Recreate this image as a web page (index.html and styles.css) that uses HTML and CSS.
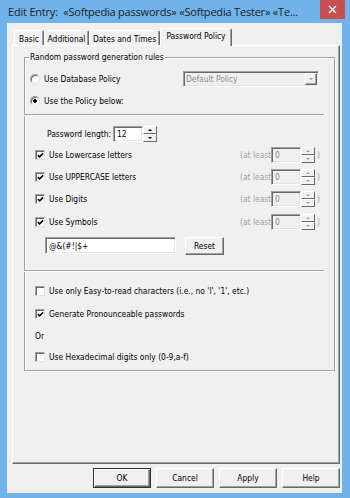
FILE: index.html
```html
<!DOCTYPE html>
<html>
<head>
<meta charset="utf-8">
<link rel="stylesheet" href="styles.css">
</head>
<body>
<div class="window">
  <div class="titlebar">
    <span class="title">Edit Entry:&nbsp;&nbsp;«Softpedia passwords» «Softpedia Tester» «Te...</span>
    <div class="close"><svg width="9" height="9" viewBox="0 0 9 9"><path d="M1 1L8 8M8 1L1 8" stroke="#fff" stroke-width="1.4"/></svg></div>
  </div>
  <div class="client">
    <div class="tabs">
      <div class="tab w-basic">Basic</div>
      <div class="tab w-add">Additional</div>
      <div class="tab w-dates">Dates and Times</div>
      <div class="tab active">Password Policy</div>
    </div>
    <div class="panel">
      <div class="group">
        <span class="legend">Random password generation rules</span>
        <div class="row r22 pl-radio">
          <span class="radio"></span><span class="lbl">Use Database Policy</span>
          <div class="combo"><span class="combo-text">Default Policy</span><span class="combo-btn"><i class="arr-down dis"></i></span></div>
        </div>
        <div class="row r22 pl-radio">
          <span class="radio on"></span><span class="lbl">Use the Policy below:</span>
        </div>
        <div class="sep sep1"></div>
        <div class="row r21 pl-len">
          <span class="len-lbl">Password length:</span>
          <span class="field len-field">12</span>
          <span class="spin"><span><i class="arr-up"></i></span><span><i class="arr-down"></i></span></span>
        </div>
        <div class="row r22 pl-chk">
          <span class="chk"><svg viewBox="0 0 8 8"><path d="M1 3.6L3 5.6L7 1.6" fill="none" stroke="#000" stroke-width="1.7"/></svg></span>
          <span class="lbl chk-lbl">Use Lowercase letters</span>
          <span class="atleast">(at least</span><span class="field dis small-field">0</span><span class="spin dis"><span><i class="arr-up dis"></i></span><span><i class="arr-down dis"></i></span></span><span class="paren">)</span>
        </div>
        <div class="row r22 pl-chk">
          <span class="chk"><svg viewBox="0 0 8 8"><path d="M1 3.6L3 5.6L7 1.6" fill="none" stroke="#000" stroke-width="1.7"/></svg></span>
          <span class="lbl chk-lbl">Use UPPERCASE letters</span>
          <span class="atleast">(at least</span><span class="field dis small-field">0</span><span class="spin dis"><span><i class="arr-up dis"></i></span><span><i class="arr-down dis"></i></span></span><span class="paren">)</span>
        </div>
        <div class="row r22 pl-chk">
          <span class="chk"><svg viewBox="0 0 8 8"><path d="M1 3.6L3 5.6L7 1.6" fill="none" stroke="#000" stroke-width="1.7"/></svg></span>
          <span class="lbl chk-lbl">Use Digits</span>
          <span class="atleast">(at least</span><span class="field dis small-field">0</span><span class="spin dis"><span><i class="arr-up dis"></i></span><span><i class="arr-down dis"></i></span></span><span class="paren">)</span>
        </div>
        <div class="row r22 pl-chk mt1">
          <span class="chk"><svg viewBox="0 0 8 8"><path d="M1 3.6L3 5.6L7 1.6" fill="none" stroke="#000" stroke-width="1.7"/></svg></span>
          <span class="lbl chk-lbl">Use Symbols</span>
          <span class="atleast">(at least</span><span class="field dis small-field">0</span><span class="spin dis"><span><i class="arr-up dis"></i></span><span><i class="arr-down dis"></i></span></span><span class="paren">)</span>
        </div>
        <div class="row sym-row">
          <span class="field sym-field">@&amp;(#!|$+</span>
          <span class="btn reset">Reset</span>
        </div>
        <div class="sep sep2"></div>
        <div class="row r22 pl-chk mt8">
          <span class="chk"></span>
          <span class="lbl">Use only Easy-to-read characters (i.e., no 'l', '1', etc.)</span>
        </div>
        <div class="row r22 pl-chk mt1">
          <span class="chk"><svg viewBox="0 0 8 8"><path d="M1 3.6L3 5.6L7 1.6" fill="none" stroke="#000" stroke-width="1.7"/></svg></span>
          <span class="lbl">Generate Pronounceable passwords</span>
        </div>
        <div class="row r21 pl-chk">
          <span>Or</span>
        </div>
        <div class="row r22 pl-chk">
          <span class="chk"></span>
          <span class="lbl">Use Hexadecimal digits only (0-9,a-f)</span>
        </div>
      </div>
    </div>
    <div class="buttons">
      <span class="btn default">OK</span>
      <span class="btn">Cancel</span>
      <span class="btn">Apply</span>
      <span class="btn">Help</span>
    </div>
  </div>
</div>
</body>
</html>
```

FILE: styles.css
```css
* { box-sizing: border-box; }
body {
  margin: 0;
  background: #6fb3ea;
  font-family: "DejaVu Sans Condensed", "Liberation Sans", sans-serif;
  font-size: 8.4px;
  color: #000;
}
.window {
  width: 350px;
  height: 498px;
  background: #6fb3ea;
  display: flex;
  flex-direction: column;
  overflow: hidden;
}
.titlebar {
  height: 23px;
  flex: none;
  display: flex;
  justify-content: space-between;
  align-items: flex-start;
}
.title {
  font-family: "Open Sans", "Noto Sans", sans-serif;
  font-size: 11px;
  letter-spacing: -0.2px;
  line-height: 24px;
  padding-left: 8px;
  white-space: nowrap;
  color: #1e1e1e;
}
.close {
  flex: none;
  width: 25px;
  height: 19px;
  margin-right: 5px;
  background: #c75050;
  display: flex;
  align-items: center;
  justify-content: center;
}
.close svg { display: block; }
.client {
  margin: 0 8px 0 7px;
  height: 470px;
  background: #f0f0f0;
  padding-top: 5px;
}
.tabs {
  display: flex;
  align-items: flex-end;
  height: 17px;
  padding-left: 7px;
  position: relative;
  z-index: 1;
}
.tab {
  height: 15px;
  border-top: 1px solid #fff;
  border-left: 1px solid #fff;
  border-right: 1px solid #696969;
  box-shadow: inset -1px 0 #a0a0a0;
  border-radius: 2px 2px 0 0;
  display: flex;
  align-items: center;
  justify-content: center;
  white-space: nowrap;
  padding-top: 1px;
}
.w-basic { width: 30px; }
.w-add { width: 45px; }
.w-dates { width: 71px; }
.tab.active {
  width: 72px;
  height: 18px;
  margin-bottom: -1px;
  background: #f0f0f0;
  padding-top: 0;
  padding-bottom: 3px;
}
.panel {
  margin-left: 5px;
  width: 328px;
  height: 419px;
  border-top: 1px solid #fff;
  border-left: 1px solid #fff;
  border-right: 1px solid #696969;
  border-bottom: 1px solid #696969;
  box-shadow: inset -1px -1px #a0a0a0;
  padding: 11px 0 0 11px;
}
.group {
  position: relative;
  width: 311px;
  height: 314px;
  border: 1px solid #a0a0a0;
  box-shadow: 1px 1px 0 #fff, inset 1px 1px 0 #fff;
  padding-top: 10px;
}
.legend {
  position: absolute;
  left: 4px;
  top: -6px;
  line-height: 11px;
  padding: 0 1px;
  background: #f0f0f0;
  white-space: nowrap;
}
.row {
  display: flex;
  align-items: center;
  white-space: nowrap;
}
.r22 { height: 22px; }
.r21 { height: 21px; }
.mt1 { margin-top: 1px; }
.mt8 { margin-top: 8px; }
.pl-radio { padding-left: 5px; }
.pl-chk { padding-left: 10px; }
.pl-len { padding-left: 22px; margin-top: 7px; }
.lbl { margin-left: 4px; }
.radio {
  flex: none;
  width: 10px;
  height: 10px;
  border-radius: 50%;
  border: 1px solid;
  border-color: #a0a0a0 #e3e3e3 #e3e3e3 #a0a0a0;
  background: #fff;
  box-shadow: inset 1px 1px 0 #696969;
}
.radio.on {
  background: radial-gradient(circle at 50% 50%, #000 0, #000 1.6px, #fff 2.1px);
}
.combo {
  margin-left: auto;
  margin-right: 15px;
  width: 136px;
  height: 16px;
  border: 1px solid;
  border-color: #a0a0a0 #fff #fff #a0a0a0;
  box-shadow: inset 1px 1px 0 #696969, inset -1px -1px 0 #e3e3e3;
  background: #f0f0f0;
  display: flex;
  align-items: center;
  padding: 1px 1px 1px 2px;
}
.combo-text { flex: 1; color: #8a8a8a; }
.combo-btn {
  width: 12px;
  height: 12px;
  border: 1px solid;
  border-color: #fff #696969 #696969 #fff;
  box-shadow: inset -1px -1px 0 #a0a0a0;
  display: flex;
  align-items: center;
  justify-content: center;
}
.sep {
  height: 2px;
  border-top: 1px solid #a0a0a0;
  border-bottom: 1px solid #fff;
  margin-left: -1px;
  width: 300px;
}
.sep1 { margin-top: 2px; }
.sep2 { margin-top: 15px; }
.len-lbl { width: 66px; }
.field {
  height: 16px;
  border: 1px solid;
  border-color: #a0a0a0 #fff #fff #a0a0a0;
  box-shadow: inset 1px 1px 0 #696969, inset -1px -1px 0 #e3e3e3;
  background: #fff;
  display: flex;
  align-items: center;
  padding-left: 3px;
}
.field.dis { background: #f0f0f0; color: #8a8a8a; }
.len-field { width: 30px; }
.spin {
  width: 14px;
  height: 16px;
  display: flex;
  flex-direction: column;
}
.spin > span {
  flex: 1;
  border: 1px solid;
  border-color: #fff #696969 #696969 #fff;
  background: #f0f0f0;
  display: flex;
  align-items: center;
  justify-content: center;
}
.arr-up, .arr-down {
  width: 0;
  height: 0;
  border-left: 2px solid transparent;
  border-right: 2px solid transparent;
}
.arr-up { border-bottom: 2px solid #000; }
.arr-down { border-top: 2px solid #000; }
.arr-up.dis { border-bottom-color: #a0a0a0; }
.arr-down.dis { border-top-color: #a0a0a0; }
.chk {
  flex: none;
  width: 10px;
  height: 10px;
  border: 1px solid;
  border-color: #a0a0a0 #e3e3e3 #e3e3e3 #a0a0a0;
  box-shadow: inset 1px 1px 0 #696969;
  background: #fff;
  display: flex;
  align-items: center;
  justify-content: center;
}
.chk svg { width: 7px; height: 7px; display: block; margin: 1px 0 0 1px; }
.chk-lbl { width: 191px; }
.atleast { width: 31px; color: #a0a0a0; }
.small-field { width: 30px; }
.paren { margin-left: 2px; color: #a0a0a0; }
.sym-row { margin-top: 4px; height: 18px; padding-left: 20px; align-items: flex-start; }
.sym-field { width: 131px; height: 17px; }
.btn {
  flex: none;
  width: 58px;
  height: 20px;
  border: 1px solid;
  border-color: #fff #696969 #696969 #fff;
  box-shadow: inset -1px -1px 0 #a0a0a0;
  background: #f0f0f0;
  display: flex;
  align-items: center;
  justify-content: center;
}
.reset { width: 39px; height: 18px; margin-left: 9px; }
.btn.default {
  border-color: #303030;
  box-shadow: inset 1px 1px 0 #fff, inset -1px -1px 0 #696969, inset -2px -2px 0 #a0a0a0;
}
.buttons {
  display: flex;
  justify-content: flex-end;
  gap: 5px;
  margin-top: 4px;
  padding-right: 2px;
}
```
